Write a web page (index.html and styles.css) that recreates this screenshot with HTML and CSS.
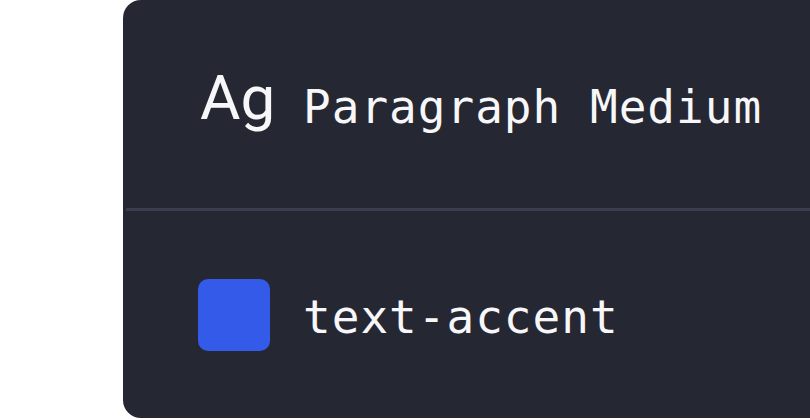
FILE: index.html
```html
<!DOCTYPE html>
<html lang="en">
<head>
  <meta charset="UTF-8" />
  <meta name="viewport" content="width=device-width, initial-scale=1.0"/>
  <title>Token preview</title>
  <link rel="stylesheet" href="styles.css">
</head>
<body>
  <div class="stage">
    <div class="token-card">
      <div class="token-row">
        <div class="token-icon type-sample">Ag</div>
        <div class="token-name">Paragraph Medium</div>
      </div>
      <div class="token-divider"></div>
      <div class="token-row">
        <div class="token-icon swatch"></div>
        <div class="token-name">text-accent</div>
      </div>
    </div>
  </div>
</body>
</html>
```

FILE: styles.css
```css
:root {
  --card-bg: #252733;
  --divider: #3b3d4e;
  --text-color: #f7f7f9;
  --accent: #335ae8;
}
* {
  margin: 0;
  padding: 0;
  box-sizing: border-box;
}
body {
  background: #fff;
  font-family: 'Roboto', sans-serif;
}
.stage {
  height: 420px;
  overflow: hidden;
  padding-left: 123px;
}
.token-card {
  width: 760px;
  height: 418px;
  background: var(--card-bg);
  border-radius: 18px;
  display: flex;
  flex-direction: column;
}
.token-row {
  flex: 1;
  display: flex;
  align-items: center;
  gap: 33px;
  padding-left: 75px;
}
.token-divider {
  height: 3px;
  margin-left: 3px;
  background: var(--divider);
}
.token-icon {
  width: 72px;
  flex-shrink: 0;
}
.type-sample {
  font-size: 62px;
  line-height: 1;
  color: var(--text-color);
  padding-left: 2px;
  margin-top: -11px;
}
.swatch {
  height: 72px;
  border-radius: 10px;
  background: var(--accent);
  margin-top: 2px;
}
.token-name {
  font-family: 'DejaVu Sans Mono', monospace;
  font-size: 46px;
  letter-spacing: 1px;
  line-height: 1;
  color: var(--text-color);
  margin-top: 6px;
}
```
